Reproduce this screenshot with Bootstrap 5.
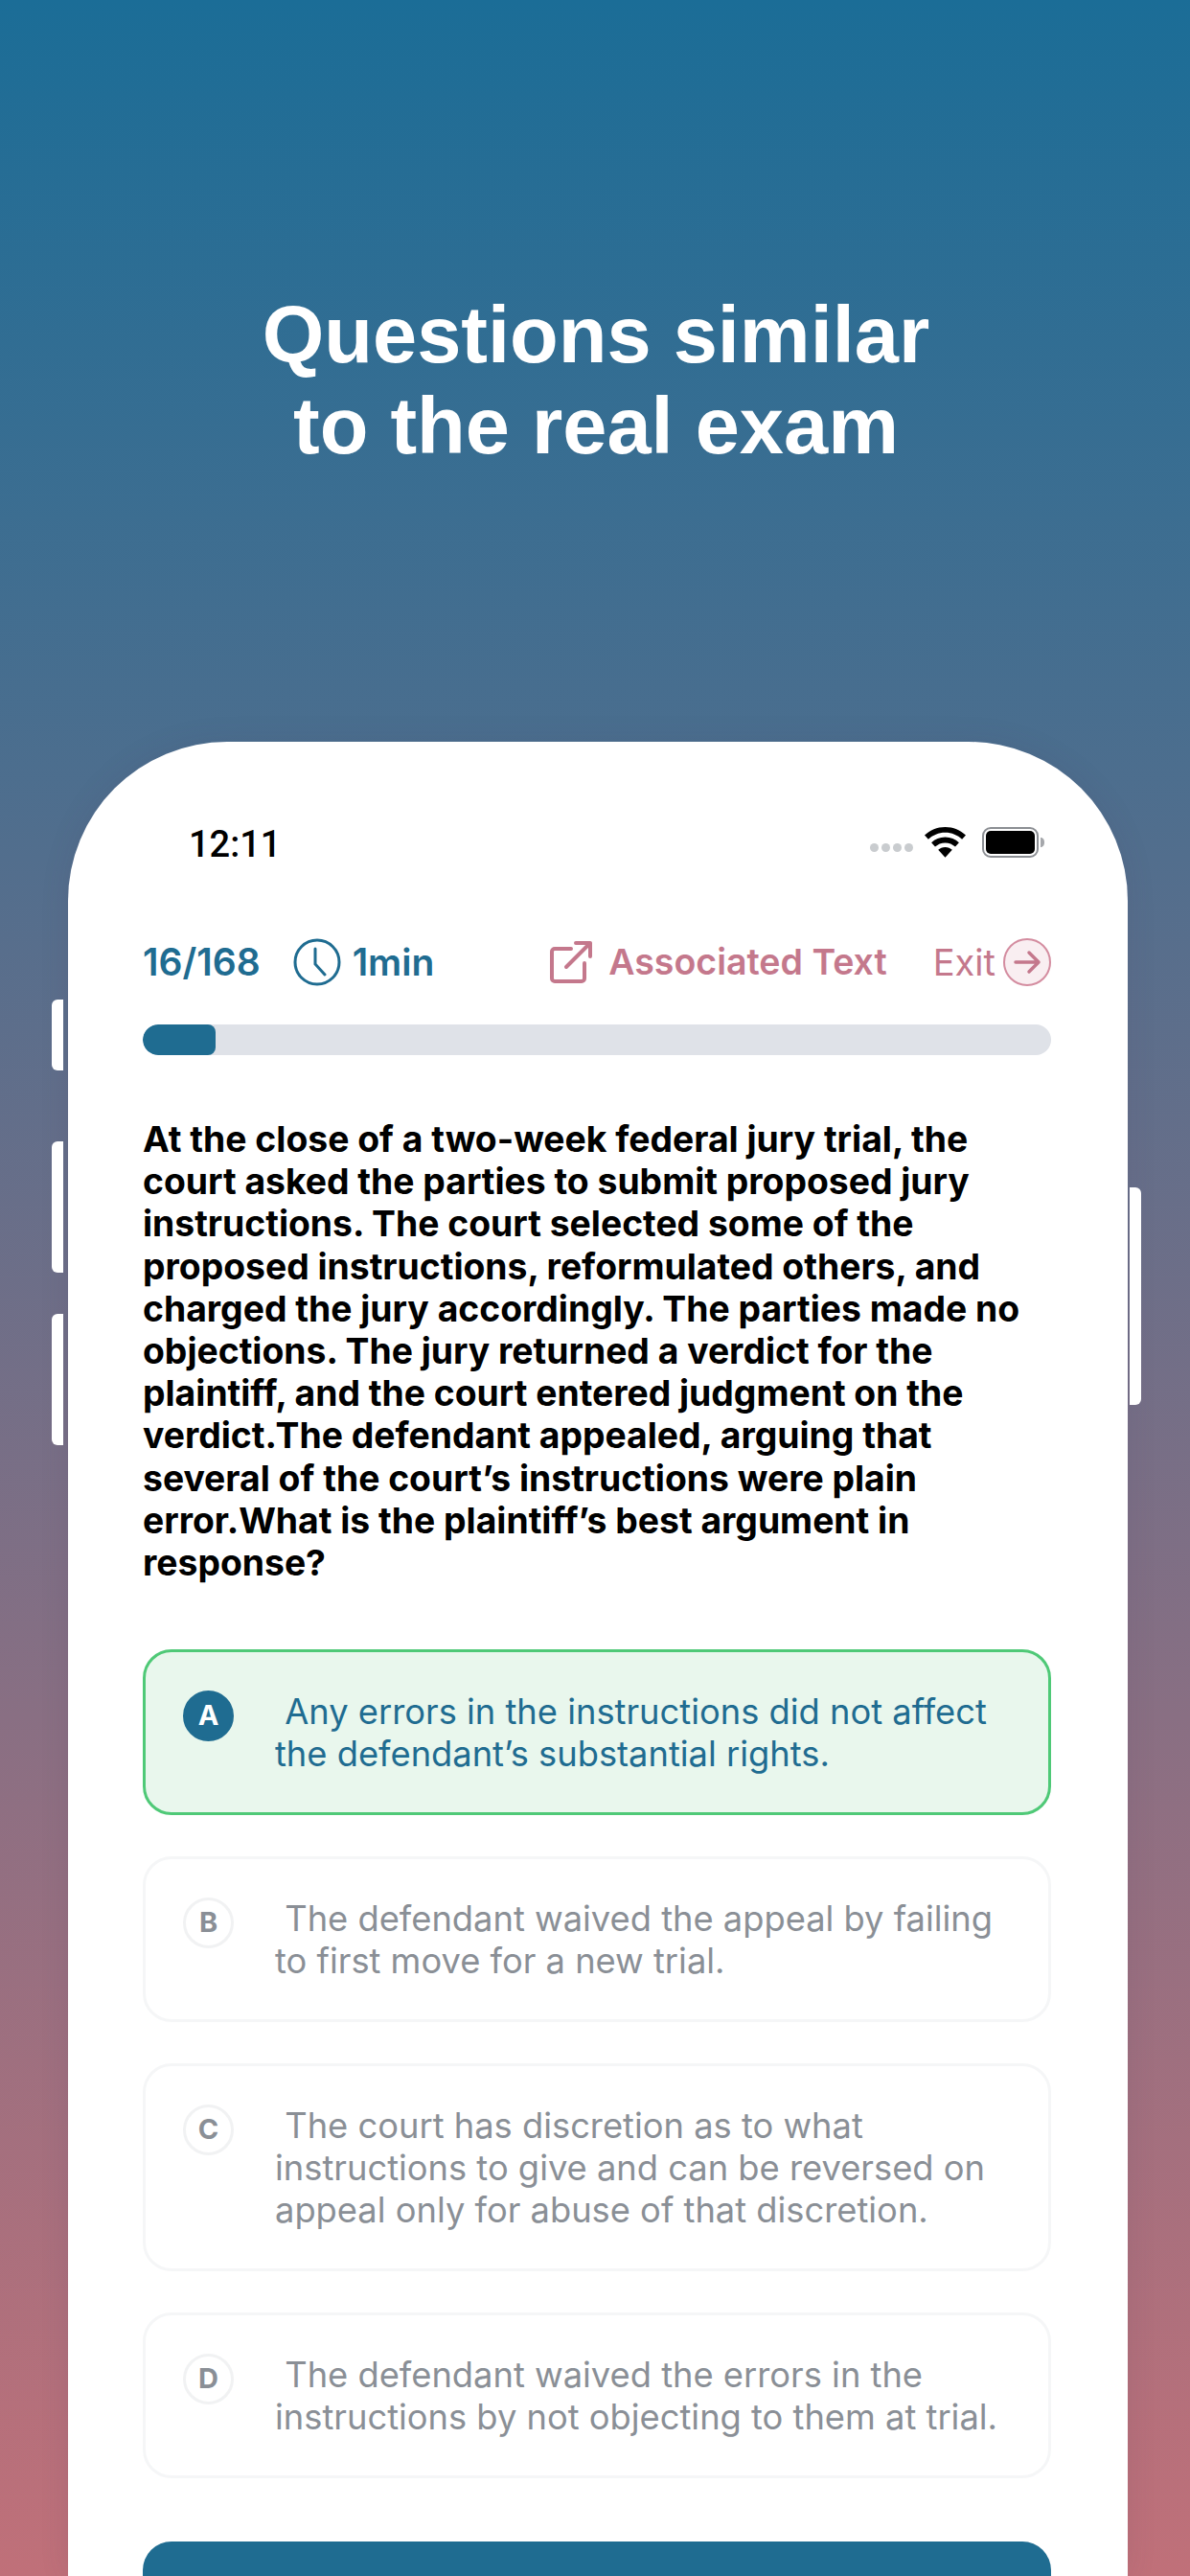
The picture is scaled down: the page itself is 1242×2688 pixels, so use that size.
<!DOCTYPE html>
<html lang="en">
<head>
<meta charset="utf-8">
<title>Questions similar to the real exam</title>
<link href="https://cdn.jsdelivr.net/npm/bootstrap@5.3.0/dist/css/bootstrap.min.css" rel="stylesheet">
<style>
html,body{margin:0;height:2688px;overflow:hidden}
body{background:linear-gradient(180deg,#1b6d97 0%,#c07079 100%);font-family:Inter,"Liberation Sans",sans-serif}
.promo-head{height:774px;padding:302px 0 0 2px}
.promo-title{font-family:"Liberation Sans",sans-serif;font-weight:700;font-size:83px;line-height:95px;color:#fff;margin:0;text-align:center}
.phone-shell{position:relative;margin:0 65px 0 71px;background:#fff;border-radius:166px 166px 0 0;height:1914px;padding:0 80px 0 78px;box-shadow:0 0 30px rgba(70,60,90,.12)}
.side-key{position:absolute;background:#fff;width:12px}
.key-a{left:-17px;top:269px;height:74px;border-radius:6px 0 0 6px}
.key-b{left:-17px;top:417px;height:137px;border-radius:6px 0 0 6px}
.key-c{left:-17px;top:597px;height:137px;border-radius:6px 0 0 6px}
.key-d{right:-14px;top:465px;height:227px;border-radius:0 6px 6px 0}
.status-row{height:205px;padding:85px 6px 0 48px;align-items:flex-start}
.clock-time{font-family:Roboto,sans-serif;font-weight:500;font-size:38px;line-height:44px;color:#000}
.sig-dot{width:9px;height:9px;border-radius:50%;background:#c9cccf;margin-right:3px;margin-top:21px}
.meta-row{height:90px}
.meta-blue{color:#1f6c91;font-weight:600;font-size:39px;line-height:48px}
.meta-rose{color:#c4788c;font-weight:600;font-size:37.5px;line-height:48px}
.meta-exit{color:#c4788c;font-weight:400;font-size:38px;line-height:48px}
.clock-ico{margin:0 12px 0 34px}
.track-bar{height:32px;background:#dfe2e8;border-radius:16px;overflow:hidden}
.track-fill{height:100%;width:76px;background:#1f6c91;border-radius:16px 8px 8px 16px}
.q-text{font-weight:700;font-size:37.3px;line-height:44.2px;color:#000;margin:66px 0 68px}
.opt-stack{gap:43px}
.opt-box{border:3px solid #f5f6f7;border-radius:30px;padding:39.5px 30px 39.5px 39px;background:#fff;color:#8a8f96;font-size:36.3px;line-height:44px;gap:43px}
.opt-on{border-color:#4fc977;background:#e9f7ed;color:#1f6c91}
.opt-dot{flex:0 0 53px;width:53px;height:53px;border-radius:50%;border:3px solid #f1f2f3;font-weight:700;font-size:29px;color:#8a8f96}
.opt-on .opt-dot{background:#1f6c91;border-color:#1f6c91;color:#fff}
.go-btn{height:120px;background:#1f6c91;border:0;border-radius:30px;margin-top:66px}
</style>
</head>
<body>
<header class="promo-head">
  <h1 class="promo-title">Questions similar<br>to the real exam</h1>
</header>
<main class="phone-shell">
  <span class="side-key key-a"></span><span class="side-key key-b"></span><span class="side-key key-c"></span><span class="side-key key-d"></span>
  <div class="status-row d-flex justify-content-between">
    <span class="clock-time">12:11</span>
    <div class="d-flex align-items-start">
      <span class="sig-dot"></span><span class="sig-dot"></span><span class="sig-dot"></span><span class="sig-dot"></span>
      <svg class="ms-2" width="45" height="32" viewBox="0 0 45 32" style="margin-top:4px"><path d="M22.5 0C14 0 6.6 3.4 1 8.6l3.9 4.2C9.5 8.5 15.6 5.8 22.5 5.8s13 2.7 17.6 7l3.9-4.2C38.4 3.4 31 0 22.5 0zM22.5 10.6c-5.6 0-10.6 2.2-14.4 5.7l3.9 4.2c2.8-2.5 6.5-4.1 10.5-4.1s7.7 1.6 10.5 4.1l3.9-4.2c-3.8-3.5-8.8-5.7-14.4-5.7zM22.5 21c-2.9 0-5.4 1.1-7.3 2.8l7.3 8 7.3-8c-1.9-1.7-4.4-2.8-7.3-2.8z" fill="#000"/></svg>
      <svg class="ms-3" width="66" height="32" viewBox="0 0 66 32" style="margin-top:4px"><rect x="1" y="1" width="57" height="30" rx="8" fill="#fff" stroke="#8b8e93" stroke-width="2"/><rect x="4" y="4" width="51" height="24" rx="5" fill="#000"/><path d="M61 11c3 0 4 2.500 4 5s-1 5-4 5z" fill="#a5a7ab"/></svg>
    </div>
  </div>
  <div class="meta-row d-flex justify-content-between align-items-start">
    <div class="d-flex align-items-center">
      <span class="meta-blue">16/168</span>
      <svg class="clock-ico" width="50" height="50" viewBox="0 0 50 50" fill="none" stroke="#1f6c91" stroke-width="3" stroke-linecap="round"><circle cx="25" cy="25" r="23"/><path d="M23 11v16l10 11"/></svg>
      <span class="meta-blue">1min</span>
    </div>
    <div class="d-flex align-items-center">
      <svg class="me-3" width="46" height="46" viewBox="0 0 46 46" fill="none" stroke="#c4788c" stroke-width="4" stroke-linecap="round" stroke-linejoin="round"><path d="M23 9H6a3 3 0 0 0-3 3v28a3 3 0 0 0 3 3h28a3 3 0 0 0 3-3V24"/><path d="M18 28L43 3M28 3h15v14"/></svg>
      <span class="meta-rose">Associated Text</span>
      <span class="meta-exit ms-5 me-2">Exit</span>
      <svg width="50" height="50" viewBox="0 0 50 50" fill="none"><circle cx="25" cy="25" r="24" fill="#f9eef1" stroke="#d48da0" stroke-width="2"/><path d="M13 25h24M27 15l10 10-10 10" stroke="#c4788c" stroke-width="3.500" stroke-linecap="round" stroke-linejoin="round"/></svg>
    </div>
  </div>
  <div class="track-bar"><div class="track-fill"></div></div>
  <p class="q-text">At the close of a two-week federal jury trial, the court asked the parties to submit proposed jury instructions. The court selected some of the proposed instructions, reformulated others, and charged the jury accordingly. The parties made no objections. The jury returned a verdict for the plaintiff, and the court entered judgment on the verdict.The defendant appealed, arguing that several of the court’s instructions were plain error.What is the plaintiff’s best argument in response?</p>
  <div class="opt-stack d-flex flex-column">
    <div class="opt-box opt-on d-flex align-items-start">
      <span class="opt-dot d-flex align-items-center justify-content-center">A</span>
      <span>&nbsp;Any errors in the instructions did not affect the defendant’s substantial rights.</span>
    </div>
    <div class="opt-box d-flex align-items-start">
      <span class="opt-dot d-flex align-items-center justify-content-center">B</span>
      <span>&nbsp;The defendant waived the appeal by failing to first move for a new trial.</span>
    </div>
    <div class="opt-box d-flex align-items-start">
      <span class="opt-dot d-flex align-items-center justify-content-center">C</span>
      <span>&nbsp;The court has discretion as to what instructions to give and can be reversed on appeal only for abuse of that discretion.</span>
    </div>
    <div class="opt-box d-flex align-items-start">
      <span class="opt-dot d-flex align-items-center justify-content-center">D</span>
      <span>&nbsp;The defendant waived the errors in the instructions by not objecting to them at trial.</span>
    </div>
  </div>
  <div class="go-btn"></div>
</main>
<script src="https://cdn.jsdelivr.net/npm/bootstrap@5.3.0/dist/js/bootstrap.bundle.min.js"></script>
</body>
</html>
